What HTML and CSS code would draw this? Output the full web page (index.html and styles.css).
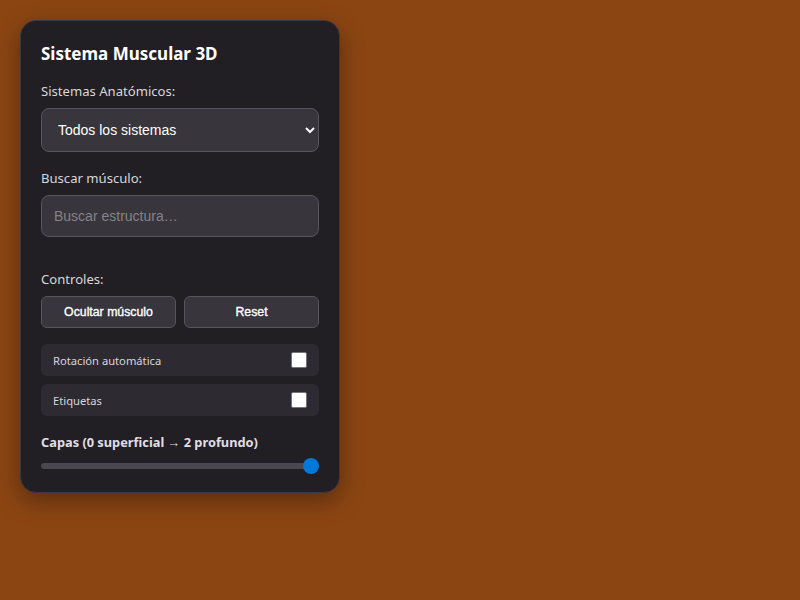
FILE: index.html
```html
<!DOCTYPE html>
<html lang="es">
<head>
<meta charset="utf-8">
<title>Sistema Muscular 3D</title>
<link rel="stylesheet" href="styles.css">
</head>
<body>
<div class="panel">
  <h1 class="title">Sistema Muscular 3D</h1>
  <label class="label" for="sys">Sistemas Anatómicos:</label>
  <select id="sys" class="select">
    <option>Todos los sistemas</option>
  </select>
  <label class="label label-gap" for="q">Buscar músculo:</label>
  <input id="q" class="input" type="text" placeholder="Buscar estructura…">
  <div class="label controls-label">Controles:</div>
  <div class="btn-row">
    <button class="btn">Ocultar músculo</button>
    <button class="btn">Reset</button>
  </div>
  <label class="check-row"><span>Rotación automática</span><input type="checkbox" class="check"></label>
  <label class="check-row"><span>Etiquetas</span><input type="checkbox" class="check"></label>
  <div class="layers-label">Capas (0 superficial → 2 profundo)</div>
  <input type="range" class="range" min="0" max="2" value="2">
</div>
</body>
</html>
```
FILE: styles.css
```css
html, body {
  margin: 0;
  padding: 0;
}
body {
  background: #8b4513;
  width: 800px;
  height: 600px;
  font-family: "Noto Sans", "Open Sans", sans-serif;
  color: #fff;
}
.panel {
  margin: 20px 0 0 20px;
  width: 278px;
  padding: 20px 20px 18px;
  background: #211f24;
  border: 1px solid #3a3840;
  border-radius: 16px;
  box-shadow: 0 8px 24px rgba(0,0,0,0.35);
  display: flex;
  flex-direction: column;
}
.title {
  font-size: 17px;
  font-weight: 700;
  margin: 1px 0 15px;
  line-height: 24px;
}
.label {
  font-size: 13.1px;
  color: #d8d6dc;
  line-height: 20px;
  margin-bottom: 7px;
}
.label-gap { margin-top: 16px; }
.select {
  height: 44px;
  background: #38353d;
  color: #fff;
  border: 1px solid #57545c;
  border-radius: 8px;
  padding: 0 12px;
  font-family: "Liberation Sans", Arial, sans-serif;
  font-size: 14px;
  color-scheme: dark;
}
.input {
  height: 42px;
  box-sizing: border-box;
  background: #38353d;
  color: #fff;
  border: 1px solid #57545c;
  border-radius: 8px;
  padding: 0 12px;
  font-family: "Liberation Sans", Arial, sans-serif;
  font-size: 14px;
}
.input::placeholder { color: #85828a; }
.controls-label { margin-top: 32px; margin-bottom: 7px; }
.btn-row {
  display: flex;
  gap: 8px;
  margin-bottom: 16px;
}
.btn {
  flex: 1;
  height: 32px;
  background: #38353d;
  color: #fff;
  border: 1px solid #57545c;
  border-radius: 6px;
  font-family: "Liberation Sans", Arial, sans-serif;
  font-size: 12.3px;
  font-weight: 400;
  -webkit-text-stroke: 0.35px #fff;
}
.check-row {
  display: flex;
  align-items: center;
  justify-content: space-between;
  height: 32px;
  padding: 0 12px;
  background: #2d2a31;
  border-radius: 6px;
  font-size: 11.2px;
  color: #d8d6dc;
  margin-bottom: 8px;
}
.check {
  width: 16px;
  height: 16px;
  margin: 0;
  appearance: none;
  background: #fff;
  border: 1px solid #777;
  border-radius: 2px;
}
.layers-label {
  margin-top: 8px;
  font-size: 12.8px;
  font-weight: 700;
  color: #e0dee4;
  line-height: 20px;
}
.range {
  margin: 6px 0 0;
  width: 100%;
  appearance: none;
  height: 16px;
  background: transparent;
}
.range::-webkit-slider-runnable-track {
  height: 6px;
  background: #4a4750;
  border-radius: 3px;
}
.range::-webkit-slider-thumb {
  appearance: none;
  width: 16px;
  height: 16px;
  border-radius: 50%;
  background: #0078d7;
  margin-top: -5px;
}
```
